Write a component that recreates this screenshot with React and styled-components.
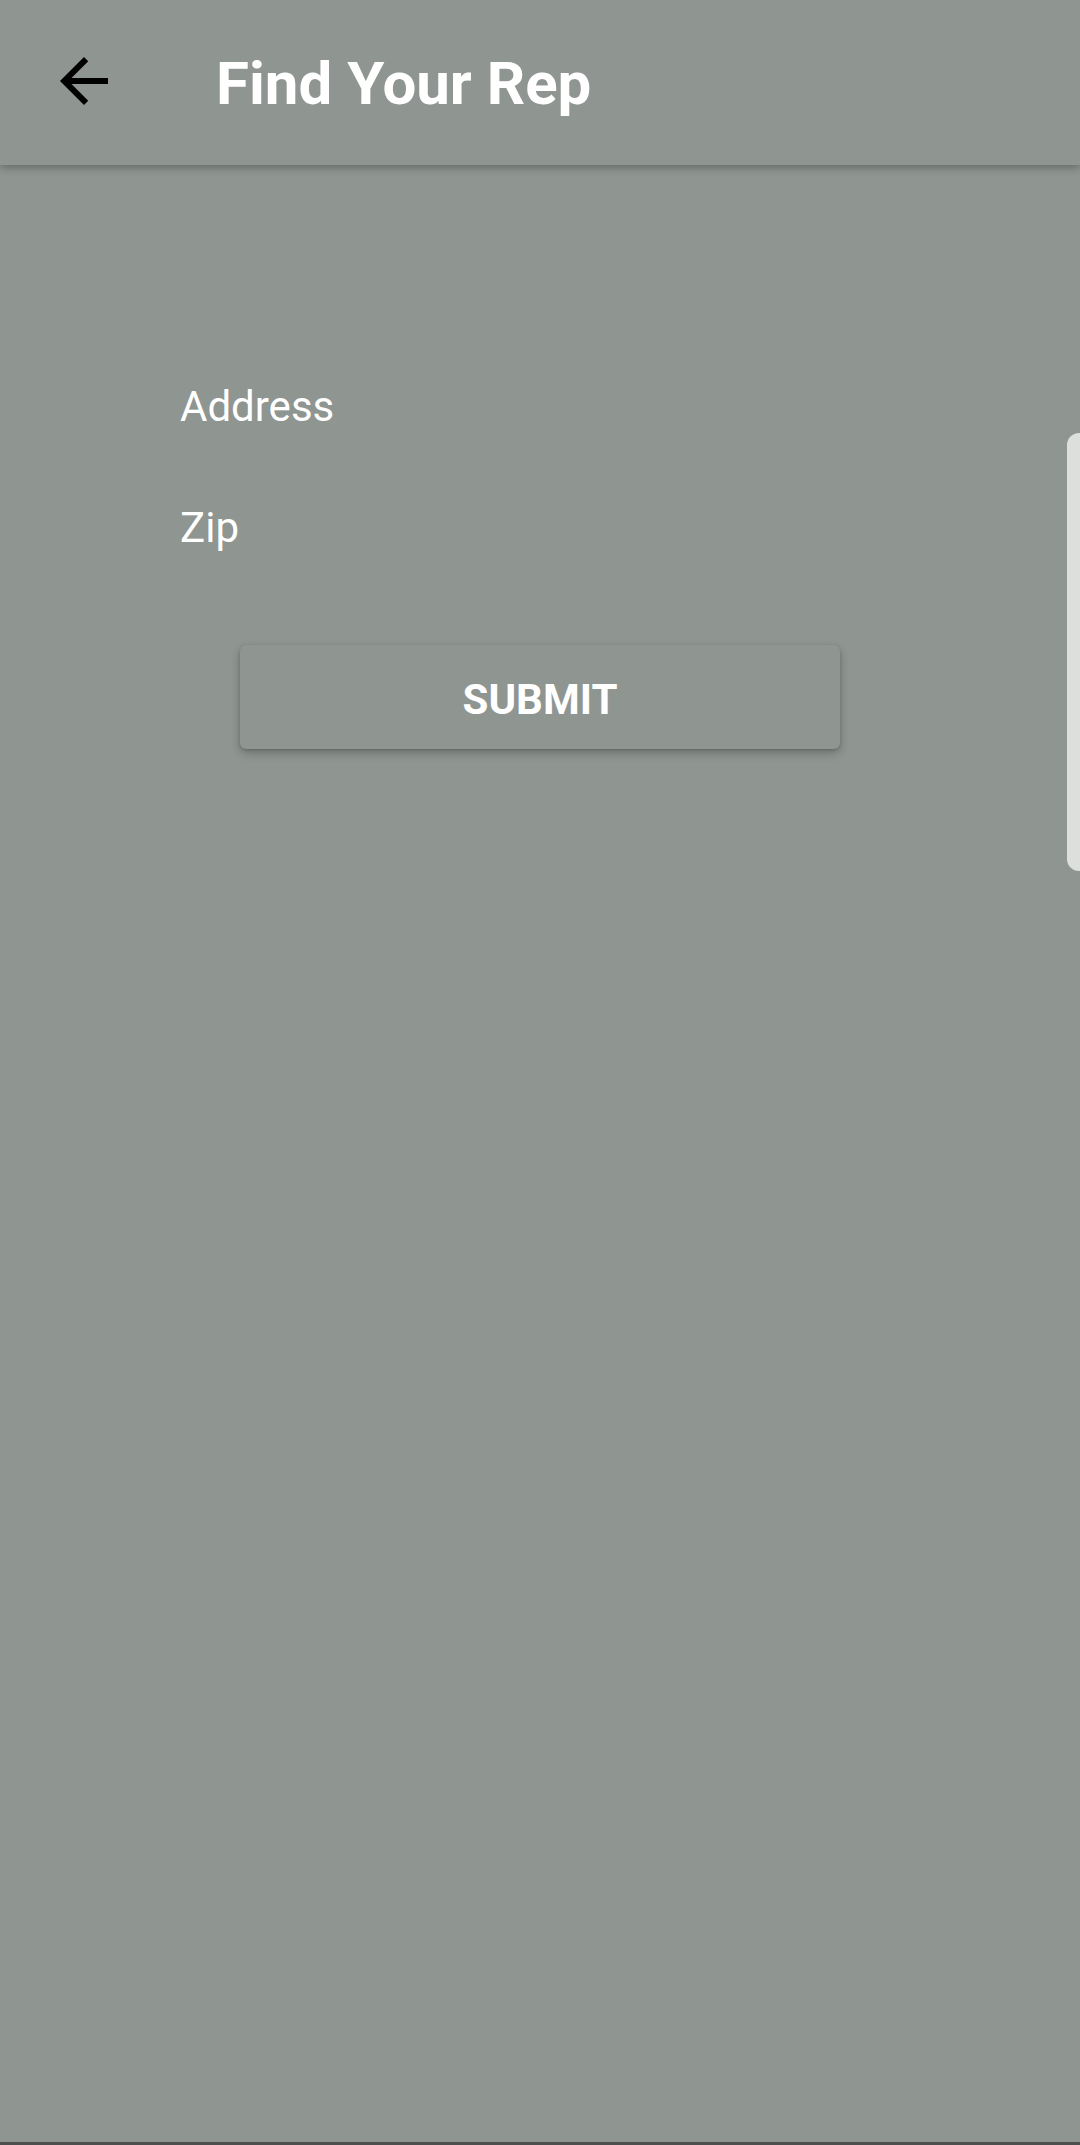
import React from 'react'
import styled, { createGlobalStyle } from 'styled-components'

const GlobalStyle = createGlobalStyle`
    html, body {
        margin: 0;
        padding: 0;
        background: #8f9591;
    }

    body {
        font-family: Roboto, 'Noto Sans', 'Liberation Sans', sans-serif;
    }
`

const Screen = styled.main`
    position: relative;
    display: flex;
    flex-direction: column;
    box-sizing: border-box;
    height: 2145px;
    overflow: hidden;
    background: #8f9591;
    border-bottom: 3px solid #4d504e;
`

const Toolbar = styled.header`
    position: relative;
    z-index: 1;
    display: flex;
    align-items: center;
    flex-shrink: 0;
    height: 165px;
    padding-left: 48px;
    padding-bottom: 3px;
    box-sizing: border-box;
    background: #8f9591;
    box-shadow: 0 3px 8px rgba(0, 0, 0, 0.28);
`

const BackButton = styled.button`
    display: flex;
    align-items: center;
    justify-content: center;
    width: 72px;
    height: 72px;
    padding: 0;
    border: none;
    background: transparent;
    color: #000;
    cursor: pointer;
`

const Title = styled.h1`
    margin: 0 0 0 96px;
    padding-top: 5px;
    color: #fff;
    font-size: 60px;
    font-weight: 700;
    line-height: 1;
`

const Form = styled.form`
    display: flex;
    flex-direction: column;
    padding: 217px 0 0 180px;
`

const Field = styled.input`
    display: block;
    width: 700px;
    height: 121px;
    margin: 0;
    padding: 0 0 72px;
    box-sizing: border-box;
    border: none;
    outline: none;
    background: transparent;
    color: #fff;
    font-family: inherit;
    font-size: 42px;
    line-height: 49px;

    &::placeholder {
        color: #fff;
        opacity: 1;
    }
`

const SubmitButton = styled.button`
    width: 600px;
    height: 104px;
    margin: 21px 0 0 60px;
    padding: 5px 0 0;
    border: none;
    border-radius: 6px;
    background: #8f9591;
    color: #fff;
    font-family: inherit;
    font-size: 42px;
    font-weight: 700;
    text-transform: uppercase;
    box-shadow: 0 4px 10px rgba(0, 0, 0, 0.24), 0 1px 3px rgba(0, 0, 0, 0.14);
    cursor: pointer;
`

// edge panel handle sitting over the screen's right border
const EdgeHandle = styled.div`
    position: absolute;
    top: 433px;
    right: 0;
    width: 13px;
    height: 438px;
    border-radius: 12px 0 0 12px;
    background: #dddfdc;
`

const ArrowBack = () => (
    <svg width="72" height="72" viewBox="0 0 24 24" fill="currentColor">
        <path d="M20 11H7.83l5.59-5.59L12 4l-8 8 8 8 1.41-1.41L7.83 13H20v-2z" />
    </svg>
)

const App = () => (
    <>
        <GlobalStyle />
        <Screen>
            <Toolbar>
                <BackButton aria-label="Back">
                    <ArrowBack />
                </BackButton>
                <Title>Find Your Rep</Title>
            </Toolbar>
            <Form onSubmit={(e) => e.preventDefault()}>
                <Field placeholder="Address" />
                <Field placeholder="Zip" />
                <SubmitButton type="submit">Submit</SubmitButton>
            </Form>
            <EdgeHandle />
        </Screen>
    </>
)

export default App
